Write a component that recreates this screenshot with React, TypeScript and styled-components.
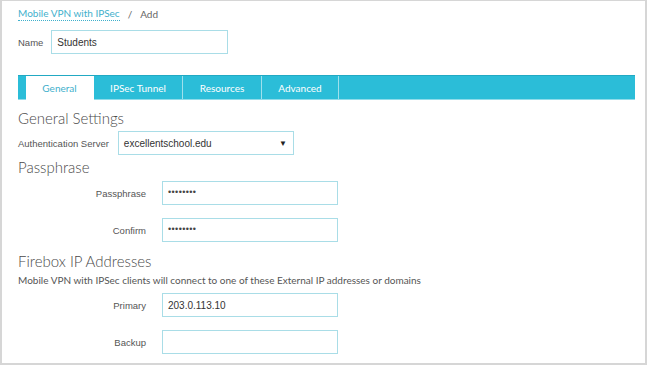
import { FC } from "react";
import styled, { createGlobalStyle } from "styled-components";

const GlobalStyle = createGlobalStyle`
    html, body {
        margin: 0;
        padding: 0;
        background: #ffffff;
    }
    * {
        box-sizing: border-box;
    }
`;

const Frame = styled.div`
    width: 647px;
    height: 365px;
    border: 1px solid #d6d6d6;
    border-left-width: 2px;
    border-right-width: 2px;
    border-bottom-width: 2px;
    padding: 5px 10px 0 16px;
    overflow: hidden;
    font-family: "Liberation Sans", Arial, sans-serif;
    color: #555555;
`;

const Breadcrumb = styled.div`
    display: flex;
    align-items: center;
    gap: 8px;
    height: 16px;
    font-family: Lato, "Open Sans", sans-serif;
    font-size: 10px;
    color: #666666;
`;

const CrumbLink = styled.span`
    color: #3fb0cc;
    border-bottom: 1px dotted #3fb0cc;
    line-height: 13px;
`;

const NameRow = styled.div`
    display: flex;
    align-items: center;
    gap: 8px;
    margin-top: 8px;
    font-size: 9.5px;
`;

interface FieldProps {
    width?: number;
}

const Field = styled.div<FieldProps>`
    width: ${(p) => p.width ?? 176}px;
    height: 24px;
    border: 1px solid #a9dde7;
    background: #ffffff;
    display: flex;
    align-items: center;
    justify-content: space-between;
    padding: 0 6px 0 5px;
    font-family: "Liberation Sans", Arial, sans-serif;
    font-size: 10px;
    color: #333333;
`;

const Dots = styled.span`
    font-size: 9px;
    letter-spacing: 0.4px;
    position: relative;
    top: -1px;
    color: #444444;
`;

const Caret = styled.span`
    font-size: 8px;
    color: #222222;
`;

const TabBar = styled.div`
    display: flex;
    margin-top: 21px;
    height: 25px;
    background: #2bbdd8;
    border-top: 1px solid #22a9c3;
    border-bottom: 1px solid #8fdcea;
    padding-left: 8px;
`;

interface TabProps {
    active?: boolean;
    width: number;
}

const Tab = styled.div<TabProps>`
    width: ${(p) => p.width}px;
    display: flex;
    align-items: center;
    justify-content: center;
    font-family: Lato, "Open Sans", sans-serif;
    font-size: 10px;
    color: ${(p) => (p.active ? "#3fb0cc" : "#ffffff")};
    background: ${(p) => (p.active ? "#ffffff" : "transparent")};
    border-right: 1px solid ${(p) => (p.active ? "#ffffff" : "#9fe0ec")};
    margin-bottom: ${(p) => (p.active ? "-1px" : "0")};
`;

interface GapProps {
    gap: number;
}

const Heading = styled.h2<GapProps>`
    margin: ${(p) => p.gap}px 0 0;
    font-family: Lato, "Open Sans", sans-serif;
    font-weight: 300;
    font-size: 15px;
    line-height: 18px;
    color: #4a4a4a;
`;

const InlineRow = styled.div`
    display: flex;
    align-items: center;
    gap: 9px;
    margin-top: 4px;
    font-size: 9.5px;
`;

const FormGrid = styled.div<GapProps>`
    display: grid;
    grid-template-columns: 128px 176px;
    column-gap: 16px;
    row-gap: 13px;
    align-items: center;
    margin-top: ${(p) => p.gap}px;
`;

const Label = styled.div`
    text-align: right;
    font-size: 9.5px;
    color: #555555;
`;

const Description = styled.div`
    margin-top: 4px;
    font-family: Lato, "Open Sans", sans-serif;
    font-size: 10px;
    line-height: 13px;
    color: #555555;
`;

const tabs = [
    { label: "General", width: 68 },
    { label: "IPSec Tunnel", width: 89 },
    { label: "Resources", width: 79 },
    { label: "Advanced", width: 77 },
];

const App: FC = () => {
    return (
        <>
            <GlobalStyle />
            <Frame>
                <Breadcrumb>
                    <CrumbLink>Mobile VPN with IPSec</CrumbLink>
                    <span>/</span>
                    <span>Add</span>
                </Breadcrumb>
                <NameRow>
                    <span>Name</span>
                    <Field width={177}>Students</Field>
                </NameRow>
                <TabBar>
                    {tabs.map((t, idx) => (
                        <Tab key={t.label} width={t.width} active={idx === 0}>
                            {t.label}
                        </Tab>
                    ))}
                </TabBar>
                <Heading gap={9}>General Settings</Heading>
                <InlineRow>
                    <span>Authentication Server</span>
                    <Field width={176}>
                        excellentschool.edu
                        <Caret>▼</Caret>
                    </Field>
                </InlineRow>
                <Heading gap={3}>Passphrase</Heading>
                <FormGrid gap={5}>
                    <Label>Passphrase</Label>
                    <Field>
                        <Dots>••••••••</Dots>
                    </Field>
                    <Label>Confirm</Label>
                    <Field>
                        <Dots>••••••••</Dots>
                    </Field>
                </FormGrid>
                <Heading gap={10}>Firebox IP Addresses</Heading>
                <Description>
                    Mobile VPN with IPSec clients will connect to one of these External IP
                    addresses or domains
                </Description>
                <FormGrid gap={6}>
                    <Label>Primary</Label>
                    <Field>203.0.113.10</Field>
                    <Label>Backup</Label>
                    <Field />
                </FormGrid>
            </Frame>
        </>
    );
};

export default App;
